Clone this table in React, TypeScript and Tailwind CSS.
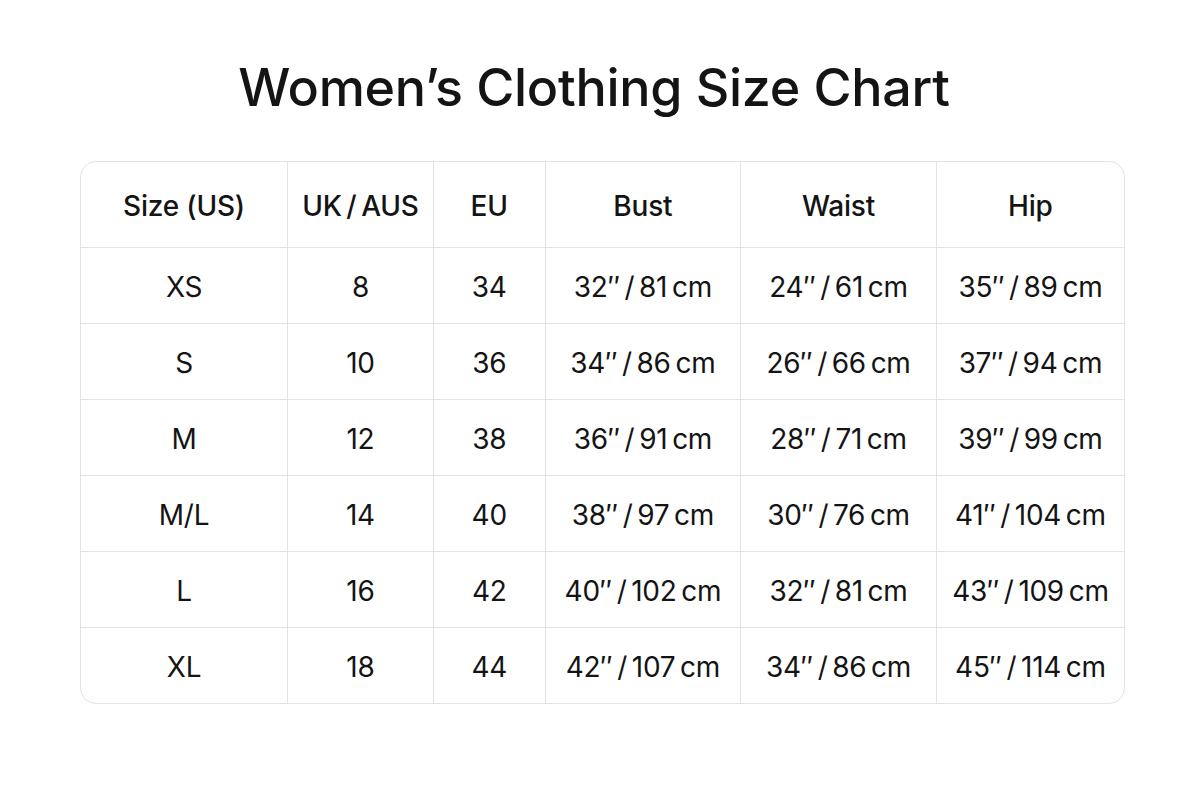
const cols = [
  { label: 'Size (US)', w: 'w-[207px]' },
  { label: 'UK\u2009/\u2009AUS', w: 'w-[146px]' },
  { label: 'EU', w: 'w-[112px]' },
  { label: 'Bust', w: 'w-[196px]' },
  { label: 'Waist', w: 'w-[196px]' },
  { label: 'Hip', w: 'w-[188px]' },
];

// bust / waist / hip are written inches″ / cm with thin spaces
const m = (inch: number, cm: number) => `${inch}″\u2009/\u2009${cm}\u2009cm`;

const rows = [
  ['XS', '8', '34', m(32, 81), m(24, 61), m(35, 89)],
  ['S', '10', '36', m(34, 86), m(26, 66), m(37, 94)],
  ['M', '12', '38', m(36, 91), m(28, 71), m(39, 99)],
  ['M/L', '14', '40', m(38, 97), m(30, 76), m(41, 104)],
  ['L', '16', '42', m(40, 102), m(32, 81), m(43, 109)],
  ['XL', '18', '44', m(42, 107), m(34, 86), m(45, 114)],
];

export default function App() {
  return (
    <div className="w-[1200px] h-[800px] bg-white text-[#141414] font-['Inter','Liberation_Sans',sans-serif]">
      <h1 className="pt-[62px] pr-[12px] text-center text-[52px] leading-[52px] font-medium tracking-[-0.3px]">
        Women’s Clothing Size Chart
      </h1>

      <div className="ml-[80px] mt-[47px] w-[1045px] rounded-[16px] border border-[#e3e3e3] overflow-hidden">
        <table className="w-full border-collapse text-[28px]">
          <thead>
            <tr className="h-[85px]">
              {cols.map((c, i) => (
                <th
                  key={c.label}
                  className={`${c.w} pt-[4px] font-medium text-center tracking-[-0.2px] ${i > 0 ? 'border-l border-[#e3e3e3]' : ''}`}
                >
                  {c.label}
                </th>
              ))}
            </tr>
          </thead>
          <tbody>
            {rows.map((r) => (
              <tr key={r[0]} className="h-[76px] border-t border-[#e3e3e3]">
                {r.map((v, i) => (
                  <td
                    key={i}
                    className={`pt-[4px] text-center tracking-[-0.3px] ${i > 0 ? 'border-l border-[#e3e3e3]' : ''}`}
                  >
                    {v}
                  </td>
                ))}
              </tr>
            ))}
          </tbody>
        </table>
      </div>
    </div>
  );
}
